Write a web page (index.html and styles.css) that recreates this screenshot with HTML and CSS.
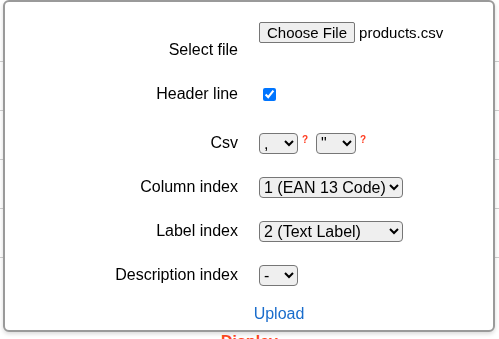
FILE: index.html
```html
<!DOCTYPE html>
<html lang="en">
<head>
<meta charset="utf-8">
<title>Import products</title>
<link rel="stylesheet" href="styles.css">
</head>
<body>
<div class="page">
  <div class="bg-row"></div>
  <div class="bg-row"></div>
  <div class="bg-row"></div>
  <div class="bg-row"></div>
  <div class="bg-row"></div>
  <div class="bg-action">Display</div>
</div>

<div class="modal">
  <form class="form">
    <div class="row row-file">
      <label class="label">Select file</label>
      <div class="control control-file">
        <span class="file-btn">Choose File</span><span class="file-name">products.csv</span>
      </div>
    </div>
    <div class="row">
      <label class="label" for="hdr">Header line</label>
      <div class="control"><input id="hdr" type="checkbox" checked></div>
    </div>
    <div class="row row-csv">
      <label class="label">Csv</label>
      <div class="control">
        <select class="sel sel-small"><option>,</option><option>;</option></select><sup class="help">?</sup>
        <select class="sel sel-small sel-quote"><option>"</option><option>'</option></select><sup class="help">?</sup>
      </div>
    </div>
    <div class="row">
      <label class="label">Column index</label>
      <div class="control">
        <select class="sel"><option>1 (EAN 13 Code)</option><option>2 (Text Label)</option><option>-</option></select>
      </div>
    </div>
    <div class="row">
      <label class="label">Label index</label>
      <div class="control">
        <select class="sel"><option>2 (Text Label)</option><option>1 (EAN 13 Code)</option><option>-</option></select>
      </div>
    </div>
    <div class="row">
      <label class="label">Description index</label>
      <div class="control">
        <select class="sel sel-small"><option>-</option></select>
      </div>
    </div>
    <div class="row-upload">
      <a class="upload" href="#">Upload</a>
    </div>
  </form>
</div>
</body>
</html>
```

FILE: styles.css
```css
html, body {
  margin: 0;
  padding: 0;
  background: #ffffff;
  font-family: "Liberation Sans", Arial, sans-serif;
  font-size: 16px;
  color: #000;
  overflow: hidden;
}

.page {
  padding-top: 13px;
}

.bg-row {
  height: 48px;
  border-bottom: 1px solid #cfcfcf;
}

.bg-action {
  margin-top: 75px;
  text-align: center;
  color: #ff4a1f;
  font-weight: bold;
  font-size: 16px;
}

.modal {
  position: fixed;
  left: 3px;
  top: 0;
  width: 488px;
  height: 328px;
  background: #fff;
  border: 2px solid #9a9a9a;
  border-radius: 6px;
  box-shadow: 0 2px 4px rgba(0, 0, 0, 0.15);
}

.form {
  padding-top: 26px;
}

.row {
  display: grid;
  grid-template-columns: 233px 1fr;
  grid-template-rows: 44px;
  column-gap: 21px;
  align-items: center;
  height: 44px;
}

.row-csv {
  margin-top: 5px;
}

.label {
  text-align: right;
}

.control {
  display: flex;
  align-items: center;
}

.control-file {
  margin-bottom: 35px;
}

.file-btn {
  font-size: 15px;
  line-height: 17px;
  padding: 1px 7px;
  border: 1px solid #767676;
  border-radius: 2px;
  background: #efefef;
  color: #000;
}

.file-name {
  font-size: 15px;
  margin-left: 4px;
}

input[type="checkbox"] {
  margin: 3px 3px 3px 4px;
  width: 13px;
  height: 13px;
}

.sel {
  font-family: "Liberation Sans", Arial, sans-serif;
  font-size: 16px;
  margin: 0;
  border-radius: 4px;
}

.sel-small {
  width: 39px;
}

.sel-quote {
  width: 40px;
}

.help {
  color: #ff3b1f;
  font-size: 10px;
  font-weight: bold;
  align-self: flex-start;
  margin: 1px 0 0 4px;
  width: 14px;
}

.row-upload {
  height: 34px;
  display: flex;
  align-items: center;
  justify-content: center;
  padding-left: 60px;
}

.upload {
  color: #1a6dcc;
  text-decoration: none;
}
```
